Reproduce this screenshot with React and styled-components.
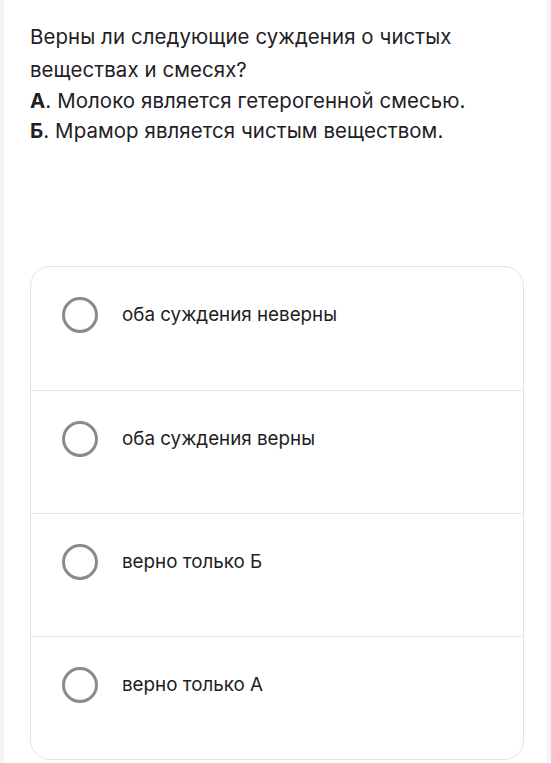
import React from 'react'
import styled, { createGlobalStyle } from 'styled-components'

const GlobalStyle = createGlobalStyle`
  html, body {
    margin: 0;
    padding: 0;
    background: #f4f4f5;
  }
  body {
    font-family: Inter, "Noto Sans", "Liberation Sans", sans-serif;
  }
`

const Page = styled.div`
  margin: 0 4px;
  min-height: 763px;
  background: #ffffff;
  padding: 20px 23px 0 26px;
  box-sizing: border-box;
`

const Question = styled.div`
  font-size: 20.4px;
  color: #1f2025;
  letter-spacing: 0.1px;
`

const Line = styled.p`
  margin: 0;
  line-height: ${(p) => (p.$tall ? '33px' : '30px')};
`

const Label = styled.b`
  font-weight: 700;
`

const Card = styled.div`
  margin-top: 120px;
  border: 1px solid #e4e4e7;
  border-radius: 20px;
  overflow: hidden;
  background: #ffffff;
`

const Option = styled.label`
  display: flex;
  align-items: flex-start;
  gap: 24px;
  height: 123px;
  padding: 30px 0 0 31px;
  box-sizing: border-box;
  cursor: pointer;
  & + & {
    border-top: 1px solid #e6e6e9;
  }
`

const Radio = styled.span`
  width: 36px;
  height: 36px;
  border-radius: 50%;
  border: 3.5px solid #8a8992;
  box-sizing: border-box;
  flex-shrink: 0;
`

const OptionText = styled.span`
  font-size: 18.8px;
  line-height: 36px;
  color: #1d1d22;
`

const options = [
  'оба суждения неверны',
  'оба суждения верны',
  'верно только Б',
  'верно только А',
]

export default function App() {
  return (
    <>
      <GlobalStyle />
      <Page>
        <Question>
          <Line $tall>Верны ли следующие суждения о чистых веществах и смесях?</Line>
          <Line><Label>А</Label>. Молоко является гетерогенной смесью.</Line>
          <Line><Label>Б</Label>. Мрамор является чистым веществом.</Line>
        </Question>
        <Card>
          {options.map((o) => (
            <Option key={o}>
              <Radio />
              <OptionText>{o}</OptionText>
            </Option>
          ))}
        </Card>
      </Page>
    </>
  )
}
